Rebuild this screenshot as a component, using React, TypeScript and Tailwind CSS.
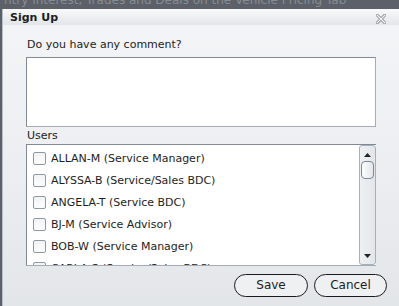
import React from 'react';

const USERS = [
  'ALLAN-M (Service Manager)',
  'ALYSSA-B (Service/Sales BDC)',
  'ANGELA-T (Service BDC)',
  'BJ-M (Service Advisor)',
  'BOB-W (Service Manager)',
  'CARLA-S (Service/Sales BDC)',
];

function CloseIcon() {
  return (
    <svg width="10" height="10" viewBox="0 0 10 10">
      <path d="M1 1 L9 9 M9 1 L1 9" stroke="#8b9097" strokeWidth="3" strokeLinecap="square" />
      <path d="M1 1 L9 9 M9 1 L1 9" stroke="#f4f5f6" strokeWidth="1.2" strokeLinecap="square" />
    </svg>
  );
}

function Checkbox() {
  return (
    <div className="w-[13px] h-[13px] shrink-0 rounded-[2px] border border-[#8e99a4] bg-gradient-to-b from-[#f1f3f5] to-[#fdfdfd]" />
  );
}

function Scrollbar() {
  return (
    <div className="w-[17px] shrink-0 flex flex-col items-center rounded-[3px] border border-[#a7b0b9] bg-gradient-to-r from-[#eef0f3] to-[#e2e6ea]">
      <svg width="7" height="4" viewBox="0 0 7 4" className="mt-[7px]">
        <path d="M0 4 L3.5 0 L7 4 Z" fill="#222" />
      </svg>
      <div className="mt-[4px] w-[13px] h-[18px] rounded-[4px] border border-[#7d8894] bg-gradient-to-r from-[#fbfcfc] to-[#e3e7eb]" />
      <div className="flex-1" />
      <svg width="7" height="4" viewBox="0 0 7 4" className="mb-[6px]">
        <path d="M0 0 L7 0 L3.5 4 Z" fill="#222" />
      </svg>
    </div>
  );
}

export default function App() {
  return (
    <div className="relative w-[399px] h-[306px] overflow-hidden bg-[#5c6169] font-['DejaVu_Sans',sans-serif] text-[11px] leading-[13px] text-[#1d1d1d]">
      {/* page behind the dialog */}
      <div className="h-[9px] overflow-hidden whitespace-nowrap pl-[4px] text-[12px] leading-[12px] text-[#878c93]">
        <div className="-mt-[6px]">ntry Interest, Trades and Deals on the Vehicle Pricing Tab</div>
      </div>

      {/* dialog */}
      <div className="absolute left-[2px] top-[9px] w-[420px] h-[297px] flex flex-col border-l border-[#b9bfc6]">
        <div className="h-[16px] shrink-0 flex items-start pt-[2px] pl-[7px] bg-gradient-to-b from-[#f8f9fa] to-[#e2e5e9]">
          <span className="font-bold">Sign Up</span>
          <div className="ml-[318px] mt-[3px]">
            <CloseIcon />
          </div>
        </div>

        <div className="flex-1 flex flex-col pl-[23px] pt-[13px] bg-gradient-to-b from-[#f3f4f6] via-[#eceef1] to-[#e3e6e9]">
          <div className="pl-[1px]">Do you have any comment?</div>
          <div className="mt-[6px] w-[350px] h-[70px] bg-white border border-[#a3adb7] border-t-[#7f8a95] border-l-[#7f8a95]" />

          <div className="mt-[2px] pl-[1px]">Users</div>
          <div className="mt-[2px] w-[350px] h-[122px] flex bg-white border border-[#a3adb7] border-t-[#7f8a95] border-l-[#7f8a95] border-r-0">
            <div className="flex-1 overflow-hidden pt-[2px] pl-[6px]">
              {USERS.map((u) => (
                <div key={u} className="h-[22px] flex items-center gap-[5px] whitespace-nowrap">
                  <Checkbox />
                  <span>{u}</span>
                </div>
              ))}
            </div>
            <Scrollbar />
          </div>

          <div className="mt-[8px] flex gap-[6px] pl-[208px]">
            <button className="w-[74px] h-[23px] rounded-full border border-[#1b1b1b] bg-[#eef0f2] text-[12px] text-[#1d1d1d]">
              Save
            </button>
            <button className="w-[73px] h-[23px] rounded-full border border-[#1b1b1b] bg-[#eef0f2] text-[12px] text-[#1d1d1d]">
              Cancel
            </button>
          </div>
        </div>
      </div>
    </div>
  );
}
